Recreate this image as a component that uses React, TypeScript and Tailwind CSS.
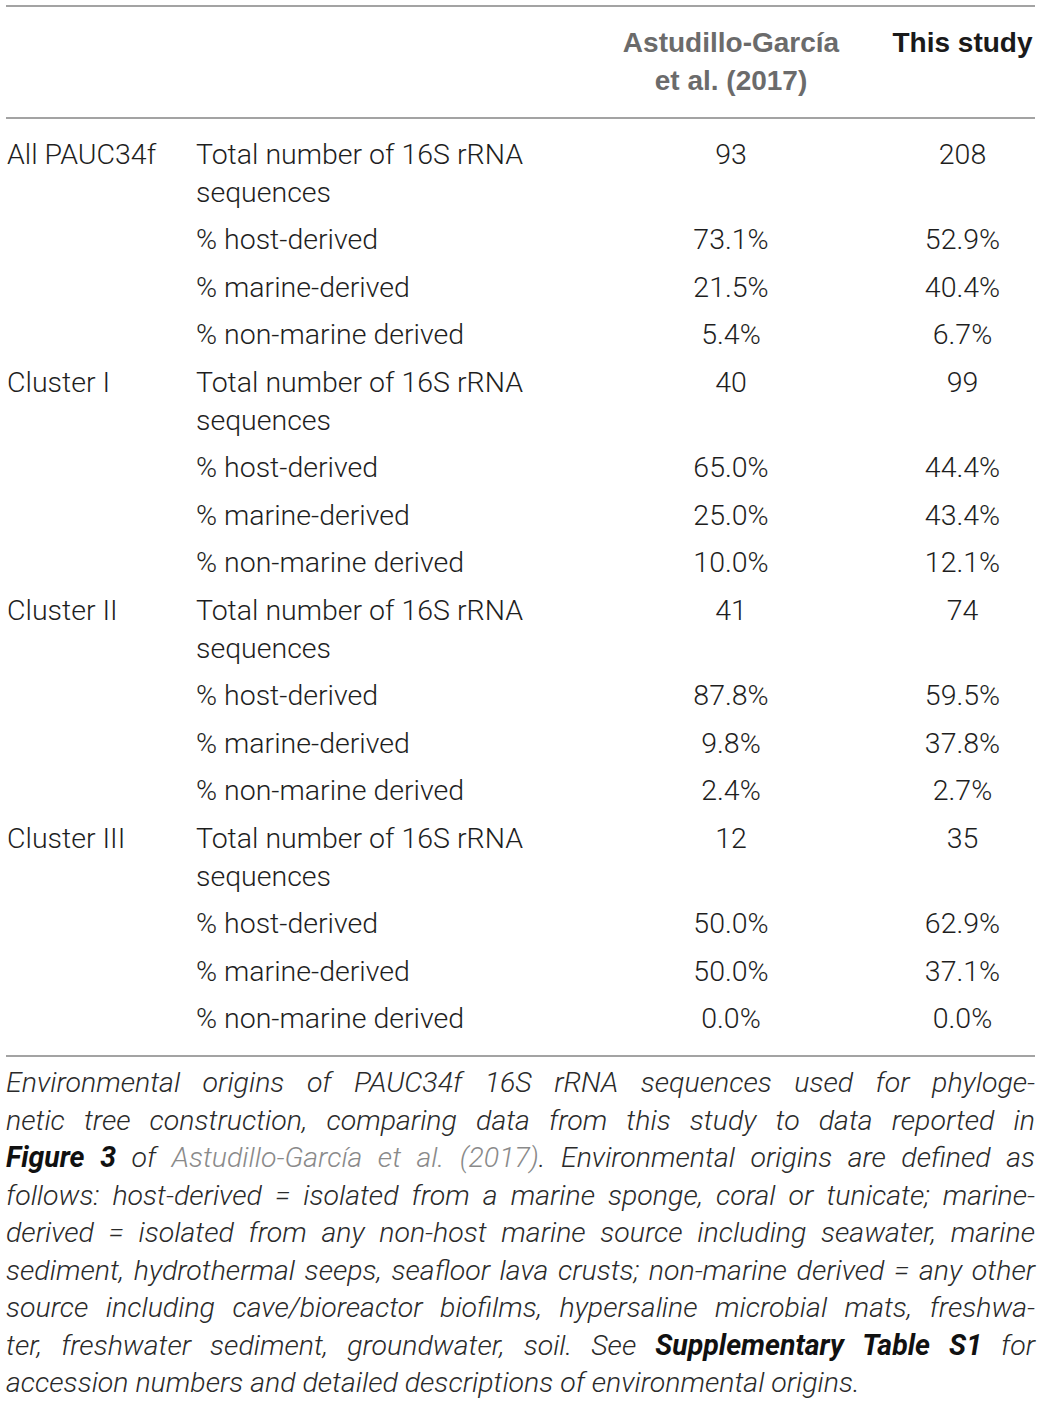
import React from "react";

const groups: { name: string; vals: [string, string][] }[] = [
  { name: "All PAUC34f", vals: [["93", "208"], ["73.1%", "52.9%"], ["21.5%", "40.4%"], ["5.4%", "6.7%"]] },
  { name: "Cluster I", vals: [["40", "99"], ["65.0%", "44.4%"], ["25.0%", "43.4%"], ["10.0%", "12.1%"]] },
  { name: "Cluster II", vals: [["41", "74"], ["87.8%", "59.5%"], ["9.8%", "37.8%"], ["2.4%", "2.7%"]] },
  { name: "Cluster III", vals: [["12", "35"], ["50.0%", "62.9%"], ["50.0%", "37.1%"], ["0.0%", "0.0%"]] },
];

const labels = ["% host-derived", "% marine-derived", "% non-marine derived"];

function Line() {
  return <div className="h-[2px] bg-[#a3a3a3]" />;
}

function BodyRow({ first, second, a, b }: { first?: string; second: React.ReactNode; a: string; b: string }) {
  return (
    <div className="grid grid-cols-[190px_420px_230px_1fr] py-[4.75px]">
      <div className="pl-[1px]">{first ?? ""}</div>
      <div>{second}</div>
      <div className="text-center">{a}</div>
      <div className="pl-[44px] text-center">{b}</div>
    </div>
  );
}

const cap = "[text-align-last:justify] text-justify whitespace-nowrap";

export default function App() {
  return (
    <div className="w-[1041px] bg-white px-[6px] pt-[5px] text-[#222]">
      <Line />
      <div
        className="grid grid-cols-[190px_420px_230px_1fr] py-[17px] text-[28px] leading-[38px] font-bold"
        style={{ fontFamily: "'Liberation Sans', Arial, sans-serif" }}
      >
        <div />
        <div />
        <div className="text-center text-[#6b6b6b]">
          Astudillo-García
          <br />
          et al. (2017)
        </div>
        <div className="pl-[44px] text-center text-[#1a1a1a]">This study</div>
      </div>
      <Line />
      <div
        className="py-[12px] text-[28.5px] leading-[38px] font-light text-[#1e1e1e]"
        style={{ fontFamily: "Roboto, 'Liberation Sans', sans-serif" }}
      >
        {groups.map((g) => (
          <React.Fragment key={g.name}>
            <BodyRow
              first={g.name}
              second={
                <>
                  Total number of 16S rRNA
                  <br />
                  sequences
                </>
              }
              a={g.vals[0][0]}
              b={g.vals[0][1]}
            />
            {labels.map((l, i) => (
              <BodyRow key={l} second={l} a={g.vals[i + 1][0]} b={g.vals[i + 1][1]} />
            ))}
          </React.Fragment>
        ))}
      </div>
      <Line />
      <div
        className="pt-[7px] pb-[4px] text-[28.5px] leading-[37.5px] italic font-light text-[#2a2a2a]"
        style={{ fontFamily: "Roboto, 'Liberation Sans', sans-serif" }}
      >
        <div className={cap}>Environmental origins of PAUC34f 16S rRNA sequences used for phyloge-</div>
        <div className={cap}>netic tree construction, comparing data from this study to data reported in</div>
        <div className={cap}>
          <span className="font-bold text-[#111]">Figure 3</span> of{" "}
          <span className="text-[#8a8a8a]">Astudillo-García et al. (2017)</span>. Environmental origins are defined as
        </div>
        <div className={cap}>follows: host-derived = isolated from a marine sponge, coral or tunicate; marine-</div>
        <div className={cap}>derived = isolated from any non-host marine source including seawater, marine</div>
        <div className={cap}>sediment, hydrothermal seeps, seafloor lava crusts; non-marine derived = any other</div>
        <div className={cap}>source including cave/bioreactor biofilms, hypersaline microbial mats, freshwa-</div>
        <div className={cap}>
          ter, freshwater sediment, groundwater, soil. See{" "}
          <span className="font-bold text-[#111]">Supplementary Table S1</span> for
        </div>
        <div>accession numbers and detailed descriptions of environmental origins.</div>
      </div>
    </div>
  );
}
